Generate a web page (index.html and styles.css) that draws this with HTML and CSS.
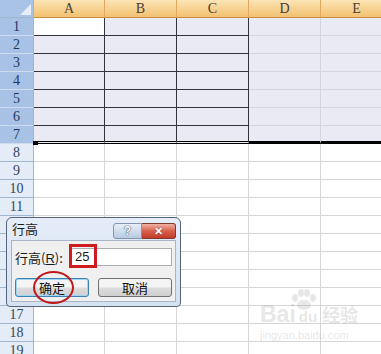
FILE: index.html
```html
<!DOCTYPE html>
<html lang="zh-CN">
    <head>
        <meta charset="UTF-8" />
        <meta name="viewport" content="width=device-width, initial-scale=1.0" />
        <title>行高</title>
        <link rel="stylesheet" href="styles.css">
    </head>
    <body>
        <div class="sheet">
            <div class="grid">
                <div class="corner"></div>
                <div class="col-head">A</div>
                <div class="col-head">B</div>
                <div class="col-head">C</div>
                <div class="col-head">D</div>
                <div class="col-head">E</div>

                <div class="row-head sel">1</div>
                <div class="cell bd active"></div><div class="cell bd sel"></div><div class="cell bd sel"></div>
                <div class="cell sel"></div><div class="cell sel"></div>

                <div class="row-head sel">2</div>
                <div class="cell bd sel"></div><div class="cell bd sel"></div><div class="cell bd sel"></div>
                <div class="cell sel"></div><div class="cell sel"></div>

                <div class="row-head sel">3</div>
                <div class="cell bd sel"></div><div class="cell bd sel"></div><div class="cell bd sel"></div>
                <div class="cell sel"></div><div class="cell sel"></div>

                <div class="row-head sel">4</div>
                <div class="cell bd sel"></div><div class="cell bd sel"></div><div class="cell bd sel"></div>
                <div class="cell sel"></div><div class="cell sel"></div>

                <div class="row-head sel">5</div>
                <div class="cell bd sel"></div><div class="cell bd sel"></div><div class="cell bd sel"></div>
                <div class="cell sel"></div><div class="cell sel"></div>

                <div class="row-head sel">6</div>
                <div class="cell bd sel"></div><div class="cell bd sel"></div><div class="cell bd sel"></div>
                <div class="cell sel"></div><div class="cell sel"></div>

                <div class="row-head sel">7</div>
                <div class="cell bd sel last handle"></div><div class="cell bd sel last"></div><div class="cell bd sel last"></div>
                <div class="cell sel last"></div><div class="cell sel last"></div>

                <div class="row-head">8</div><div class="cell"></div><div class="cell"></div><div class="cell"></div><div class="cell"></div><div class="cell"></div>
                <div class="row-head">9</div><div class="cell"></div><div class="cell"></div><div class="cell"></div><div class="cell"></div><div class="cell"></div>
                <div class="row-head">10</div><div class="cell"></div><div class="cell"></div><div class="cell"></div><div class="cell"></div><div class="cell"></div>
                <div class="row-head">11</div><div class="cell"></div><div class="cell"></div><div class="cell"></div><div class="cell"></div><div class="cell"></div>
                <div class="row-head">12</div><div class="cell"></div><div class="cell"></div><div class="cell"></div><div class="cell"></div><div class="cell"></div>
                <div class="row-head">13</div><div class="cell"></div><div class="cell"></div><div class="cell"></div><div class="cell"></div><div class="cell"></div>
                <div class="row-head">14</div><div class="cell"></div><div class="cell"></div><div class="cell"></div><div class="cell"></div><div class="cell"></div>
                <div class="row-head">15</div><div class="cell"></div><div class="cell"></div><div class="cell"></div><div class="cell"></div><div class="cell"></div>
                <div class="row-head">16</div><div class="cell"></div><div class="cell"></div><div class="cell"></div><div class="cell"></div><div class="cell"></div>
                <div class="row-head">17</div><div class="cell"></div><div class="cell"></div><div class="cell"></div><div class="cell"></div><div class="cell"></div>
                <div class="row-head">18</div><div class="cell"></div><div class="cell"></div><div class="cell"></div><div class="cell"></div><div class="cell"></div>
                <div class="row-head">19</div><div class="cell"></div><div class="cell"></div><div class="cell"></div><div class="cell"></div><div class="cell"></div>
            </div>

            <!-- row height dialog floating over the sheet -->
            <div class="dialog">
                <div class="dialog-title">
                    <span>行高</span>
                    <div class="title-btns">
                        <span class="tbtn help">?</span>
                        <span class="tbtn close">✕</span>
                    </div>
                </div>
                <div class="dialog-body">
                    <div class="field">
                        <span class="label">行高(<u>R</u>):</span>
                        <div class="input">25</div>
                    </div>
                    <div class="buttons">
                        <button class="btn default">确定</button>
                        <button class="btn">取消</button>
                    </div>
                </div>
                <span class="mark box"></span>
                <span class="mark ring"></span>
            </div>

            <div class="watermark">
                <svg class="paw" width="34" height="22" viewBox="0 0 34 22">
                    <ellipse cx="9" cy="9" rx="3" ry="4" />
                    <ellipse cx="15" cy="4" rx="3" ry="4" />
                    <ellipse cx="21" cy="4" rx="3" ry="4" />
                    <ellipse cx="27" cy="9" rx="3" ry="4" />
                    <ellipse cx="18" cy="16" rx="7" ry="5" />
                </svg>
                <div class="wm-main"><span class="wm-bai">Bai</span><span class="wm-du">du</span><span class="wm-cn">经验</span></div>
                <div class="wm-url">jingyan.baidu.com</div>
            </div>
        </div>
    </body>
</html>
```

FILE: styles.css
```css
body {
    margin: 0;
    background: #ffffff;
}

.sheet {
    position: relative;
    width: 381px;
    height: 354px;
    overflow: hidden;
}

.grid {
    display: grid;
    grid-template-columns: 34px 71px 72px 72px 72px 72px;
    grid-auto-rows: 18px;
}

.grid > div {
    box-sizing: border-box;
    border-right: 1px solid #d6d6d6;
    border-bottom: 1px solid #d6d6d6;
}

/* headers */
.corner {
    position: relative;
    background: #a8c3e6;
    border-right-color: #9eb6ce !important;
    border-bottom-color: #9eb6ce !important;
}

.corner::after {
    content: "";
    position: absolute;
    right: 2px;
    bottom: 2px;
    border-left: 11px solid transparent;
    border-bottom: 11px solid #e6edf6;
}

.col-head {
    background: linear-gradient(#fbe4b5, #f3c170);
    border-right-color: #e2a95e !important;
    border-bottom-color: #c68d42 !important;
    font: 14px/17px "Liberation Serif", serif;
    color: #4a4036;
    text-align: center;
}

.row-head {
    background: #e4ecf7;
    border-right-color: #9eb6ce !important;
    border-bottom-color: #9eb6ce !important;
    font: 14px/17px "Liberation Serif", serif;
    color: #34465c;
    text-align: center;
}

.row-head.sel {
    background: #a7c2e4;
    border-bottom-color: #cddcef !important;
    color: #1d3762;
}

/* cells */
.cell.sel {
    background: #eaeaf5;
    border-right-color: #d3d4e2;
    border-bottom-color: #d3d4e2;
}

.cell.bd {
    border-right-color: #33333b;
    border-bottom-color: #33333b;
}

.cell.active {
    background: #ffffff;
}

.cell.last {
    border-bottom: 3px solid #000000;
}

.cell.bd.last {
    border-bottom: 3px double #000000;
}

.cell.handle {
    position: relative;
}

.cell.handle::after {
    content: "";
    position: absolute;
    left: -1px;
    bottom: -4px;
    width: 5px;
    height: 4px;
    background: #000000;
}

/* dialog */
.dialog {
    position: absolute;
    left: 6px;
    top: 217px;
    width: 175px;
    height: 90px;
    box-sizing: border-box;
    padding: 0 4px 4px;
    border: 1px solid #56657a;
    border-radius: 6px 6px 4px 4px;
    background: linear-gradient(#e4edf8, #d5e1f0);
    display: flex;
    flex-direction: column;
    font-family: "Noto Sans CJK SC", sans-serif;
    color: #1b1b1b;
}

.dialog-title {
    height: 22px;
    display: flex;
    justify-content: space-between;
    font-size: 13px;
    line-height: 22px;
    padding-left: 1px;
}

.title-btns {
    display: flex;
    margin-top: 5px;
}

.tbtn {
    box-sizing: border-box;
    height: 16px;
    display: flex;
    align-items: center;
    justify-content: center;
    font: bold 12px "Liberation Sans", sans-serif;
    color: #ffffff;
}

.help {
    width: 29px;
    border: 1px solid #8194ad;
    border-radius: 3px 0 0 3px;
    background: linear-gradient(#e6eef8, #b9cbe2);
    text-shadow: 0 0 1px #2b3d55, 0 0 1px #2b3d55;
}

.close {
    width: 34px;
    border: 1px solid #7b3a34;
    border-left: none;
    border-radius: 0 3px 3px 0;
    background: linear-gradient(#eeb3a5, #d8604d 50%, #c43a28);
    text-shadow: 0 0 1px #5a1f1a;
    font-size: 11px;
}

.dialog-body {
    flex: 1;
    background: #f0f0f0;
    border: 1px solid #a8b5c7;
    padding: 7px 3px 0 3px;
}

.field {
    display: flex;
    justify-content: space-between;
    align-items: center;
    height: 18px;
}

.label {
    font-size: 13px;
}

.label u {
    font-family: "Liberation Sans", sans-serif;
}

.input {
    box-sizing: border-box;
    width: 101px;
    height: 18px;
    border: 1px solid #abadb3;
    background: #ffffff;
    font: 13px/16px "Liberation Sans", sans-serif;
    padding-left: 3px;
}

.buttons {
    display: flex;
    justify-content: space-between;
    margin-top: 12px;
}

.btn {
    box-sizing: border-box;
    width: 74px;
    height: 19px;
    padding: 0;
    border: 1px solid #707070;
    border-radius: 3px;
    background: linear-gradient(#f4f4f4 45%, #dcdcdc 55%, #d0d0d0);
    font: 13px/17px "Noto Sans CJK SC", sans-serif;
    color: #111111;
}

.btn.default {
    border-color: #3c7fb1;
    box-shadow: inset 0 0 0 1px #9fd5f5;
}

/* red annotation marks */
.mark {
    position: absolute;
    box-sizing: border-box;
}

.box {
    left: 62px;
    top: 26px;
    width: 28px;
    height: 24px;
    border: 3px solid #cf1b20;
}

.ring {
    left: 26px;
    top: 53px;
    width: 41px;
    height: 33px;
    border: 2.5px solid #c0171d;
    border-radius: 50%;
}

/* faint baidu watermark */
.watermark {
    position: absolute;
    left: 260px;
    top: 289px;
    width: 100px;
    color: rgba(170, 170, 170, 0.3);
    font-family: "Liberation Sans", sans-serif;
}

.paw {
    position: absolute;
    left: 26px;
    top: 0;
    fill: rgba(170, 170, 170, 0.28);
}

.wm-main {
    margin-top: 12px;
    display: flex;
    align-items: baseline;
    font-weight: bold;
}

.wm-bai {
    font-size: 23px;
}

.wm-du {
    font-size: 15px;
    margin-left: 3px;
}

.wm-cn {
    font: bold 18px "Noto Sans CJK SC", sans-serif;
    margin-left: 5px;
}

.wm-url {
    font-size: 11px;
    margin-top: 1px;
}
```
